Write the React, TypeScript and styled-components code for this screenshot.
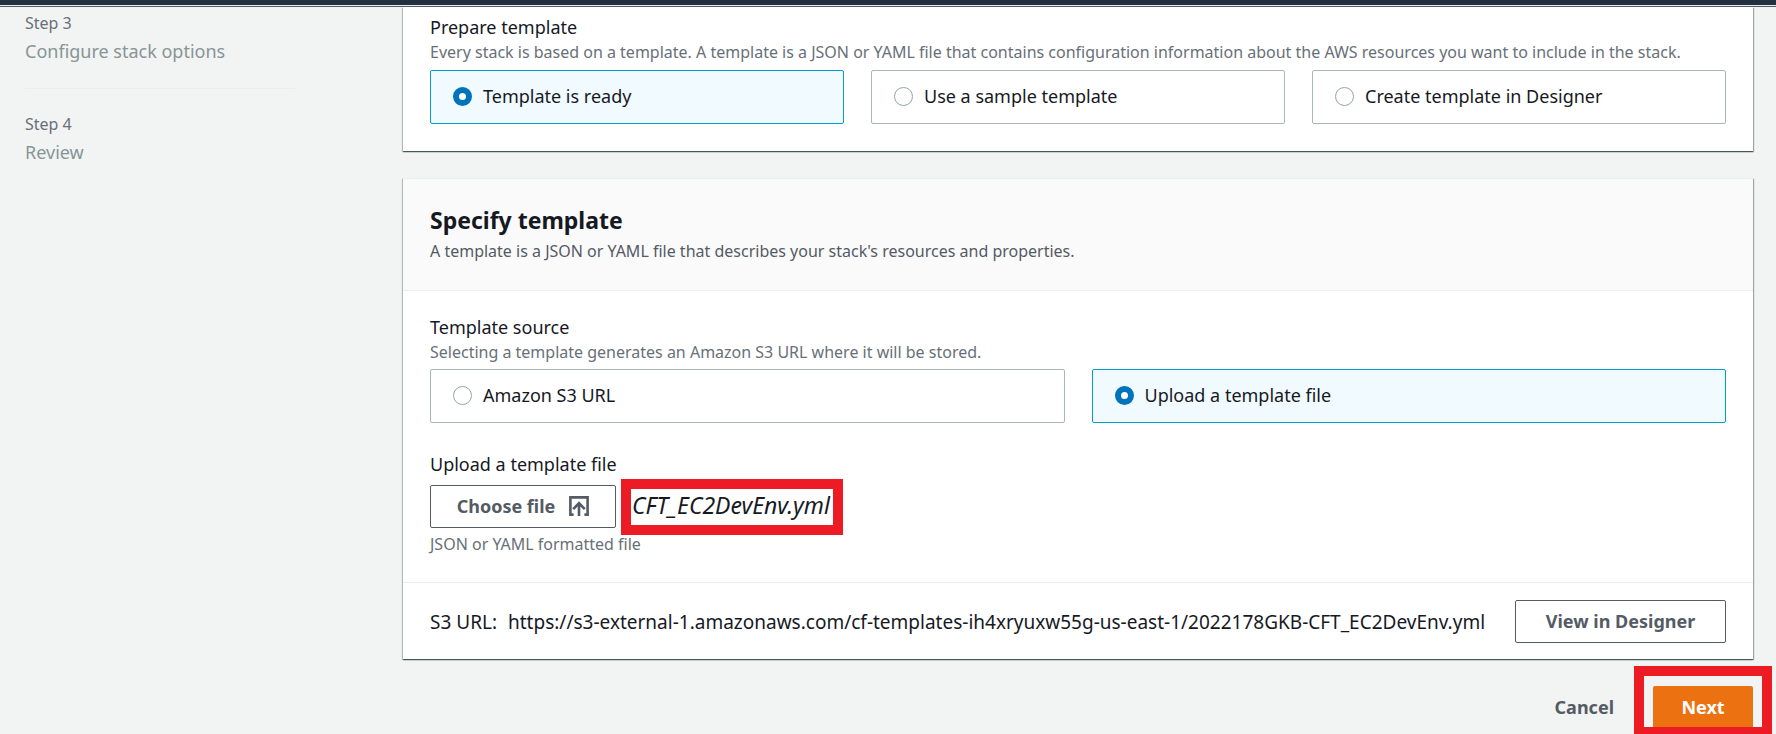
import React, { useState } from "react";
import styled, { createGlobalStyle, css } from "styled-components";

const GlobalStyle = createGlobalStyle`
  *, *::before, *::after { box-sizing: border-box; }
  body {
    margin: 0;
    background: #f2f3f3;
    color: #16191f;
    font-family: "Noto Sans", "Open Sans", sans-serif;
    font-size: 18px;
    line-height: 24px;
  }
  button, input { font: inherit; }
`;

const Page = styled.div`
  height: 100vh;
  overflow: hidden;
`;

const TopBar = styled.header`
  height: 7px;
  background: #232f3e;
  border-bottom: 1px solid #545b64;
  box-shadow: inset 0 -1px 0 #eaeded;
`;

const Layout = styled.div`
  display: grid;
  grid-template-columns: 270px minmax(0, 1fr);
  column-gap: 108px;
  padding: 0 23px 0 25px;
`;

const Steps = styled.ol`
  list-style: none;
  margin: 0;
  padding: 4px 0 0;
`;

const Step = styled.li`
  padding-bottom: 25px;

  & + & {
    border-top: 1px solid #eaeded;
    padding-top: 23px;
  }
`;

const StepNumber = styled.div`
  margin-bottom: 4px;
  font-size: 16px;
  color: #687078;
`;

const StepName = styled.div`
  color: #879596;
`;

const Main = styled.main`
  min-width: 0;
`;

const Card = styled.section`
  margin-bottom: 27px;
  background: #fff;
  box-shadow: 0 1px 1px 0 rgba(0, 28, 36, 0.5), 1px 1px 1px 0 rgba(0, 28, 36, 0.3),
    -1px 1px 1px 0 rgba(0, 28, 36, 0.2);
`;

const CardHeader = styled.div`
  padding: 24px 27px 26px;
  background: #fafafa;
  border-top: 1px solid #eaeded;
  border-bottom: 1px solid #eaeded;
`;

const Title = styled.h2`
  margin: 0 0 1px;
  font-size: 23px;
  line-height: 34px;
  font-weight: 700;
`;

const CardBody = styled.div<{ $flushTop?: boolean }>`
  padding: ${(p) => (p.$flushTop ? "8px 27px 27px" : "24px 27px 25px")};
`;

const Group = styled.fieldset`
  min-width: 0;
  margin: 0;
  padding: 0;
  border: 0;
`;

const Legend = styled.legend`
  padding: 0;
`;

const Hint = styled.p<{ $dark?: boolean }>`
  margin: 0;
  font-size: 16px;
  line-height: 26px;
  color: ${(p) => (p.$dark ? "#545b64" : "#687078")};
`;

const Tiles = styled.div<{ $spaced?: boolean }>`
  display: flex;
  gap: 27px;
  margin-top: ${(p) => (p.$spaced ? "5px" : "4px")};
`;

const Tile = styled.label<{ $selected: boolean }>`
  flex: 1 1 0;
  display: flex;
  align-items: center;
  gap: 11px;
  height: 54px;
  padding: 0 22px 2px;
  border: 1px solid ${(p) => (p.$selected ? "#00a1c9" : "#aab7b8")};
  border-radius: 2px;
  background: ${(p) => (p.$selected ? "#f1faff" : "#fff")};
  cursor: pointer;
`;

const Radio = styled.input`
  appearance: none;
  flex: none;
  width: 19px;
  height: 19px;
  margin: 0;
  border: 1px solid #95a5a6;
  border-radius: 50%;
  background: #fff;

  &:checked {
    border: 6px solid #0073bb;
  }
`;

const Upload = styled.div`
  margin-top: 29px;
`;

const UploadRow = styled.div`
  display: flex;
  align-items: center;
  gap: 16px;
  margin: 9px 0 3px;
`;

const buttonBase = css`
  display: inline-flex;
  align-items: center;
  justify-content: center;
  flex: none;
  height: 43px;
  padding: 0 0 2px;
  border: 0;
  border-radius: 2px;
  font-weight: 700;
  cursor: pointer;
`;

const OutlineButton = styled.button<{ $width: number }>`
  ${buttonBase}
  gap: 14px;
  width: ${(p) => p.$width}px;
  border: 1px solid #545b64;
  background: #fff;
  color: #545b64;
`;

const LinkButton = styled.button`
  ${buttonBase}
  padding: 0 39px 2px;
  background: none;
  color: #545b64;
`;

const PrimaryButton = styled.button`
  ${buttonBase}
  width: 100px;
  background: #ec7211;
  color: #fff;
`;

const Marked = styled.span<{ $inset: string }>`
  position: relative;
  display: inline-flex;

  &::after {
    content: "";
    position: absolute;
    inset: ${(p) => p.$inset};
    border: 10px solid #ed1c24;
    pointer-events: none;
  }
`;

const FileName = styled.em`
  padding-bottom: 4px;
  font-size: 23px;
  font-style: italic;
`;

const UrlRow = styled.div`
  display: flex;
  align-items: center;
  justify-content: space-between;
  padding: 17px 27px 16px;
  border-top: 1px solid #eaeded;
`;

const Url = styled.div`
  display: flex;
  gap: 11px;
  font-size: 19px;
`;

const Actions = styled.div`
  display: flex;
  justify-content: flex-end;
`;

function UploadIcon() {
  return (
    <svg width="20" height="20" viewBox="0 0 20 20" fill="none" stroke="currentColor" strokeWidth="2.6" aria-hidden="true">
      <path d="M4.6 18.6H1.4V1.4h17.2v17.2h-3.2" />
      <path d="M10 20V7.4M4.2 13.2 10 7.2l5.8 6" />
    </svg>
  );
}

type TileGroupProps = {
  name: string;
  legend: string;
  hint: string;
  options: string[];
  initial: string;
  spaced?: boolean;
};

function TileGroup({ name, legend, hint, options, initial, spaced }: TileGroupProps) {
  const [value, setValue] = useState(initial);
  return (
    <Group>
      <Legend>{legend}</Legend>
      <Hint>{hint}</Hint>
      <Tiles $spaced={spaced}>
        {options.map((option) => (
          <Tile key={option} $selected={option === value}>
            <Radio type="radio" name={name} checked={option === value} onChange={() => setValue(option)} />
            {option}
          </Tile>
        ))}
      </Tiles>
    </Group>
  );
}

export default function App() {
  return (
    <>
      <GlobalStyle />
      <Page>
        <TopBar />
        <Layout>
          <Steps>
            <Step>
              <StepNumber>Step 3</StepNumber>
              <StepName>Configure stack options</StepName>
            </Step>
            <Step>
              <StepNumber>Step 4</StepNumber>
              <StepName>Review</StepName>
            </Step>
          </Steps>
          <Main>
            <Card>
              <CardBody $flushTop>
                <TileGroup
                  spaced
                  name="prepare"
                  legend="Prepare template"
                  hint="Every stack is based on a template. A template is a JSON or YAML file that contains configuration information about the AWS resources you want to include in the stack."
                  options={["Template is ready", "Use a sample template", "Create template in Designer"]}
                  initial="Template is ready"
                />
              </CardBody>
            </Card>
            <Card>
              <CardHeader>
                <Title>Specify template</Title>
                <Hint $dark>A template is a JSON or YAML file that describes your stack's resources and properties.</Hint>
              </CardHeader>
              <CardBody>
                <TileGroup
                  name="source"
                  legend="Template source"
                  hint="Selecting a template generates an Amazon S3 URL where it will be stored."
                  options={["Amazon S3 URL", "Upload a template file"]}
                  initial="Upload a template file"
                />
                <Upload>
                  <div id="upload-label">Upload a template file</div>
                  <UploadRow>
                    <OutlineButton type="button" $width={186} aria-describedby="upload-label">
                      Choose file
                      <UploadIcon />
                    </OutlineButton>
                    <Marked $inset="-14px -13px -14px -11px">
                      <FileName>CFT_EC2DevEnv.yml</FileName>
                    </Marked>
                  </UploadRow>
                  <Hint>JSON or YAML formatted file</Hint>
                </Upload>
              </CardBody>
              <UrlRow>
                <Url>
                  <span>S3 URL:</span>
                  <span>https://s3-external-1.amazonaws.com/cf-templates-ih4xryuxw55g-us-east-1/2022178GKB-CFT_EC2DevEnv.yml</span>
                </Url>
                <OutlineButton type="button" $width={211}>
                  View in Designer
                </OutlineButton>
              </UrlRow>
            </Card>
            <Actions>
              <LinkButton type="button">Cancel</LinkButton>
              <Marked $inset="-20px -19px -8px -19px">
                <PrimaryButton type="button">Next</PrimaryButton>
              </Marked>
            </Actions>
          </Main>
        </Layout>
      </Page>
    </>
  );
}
